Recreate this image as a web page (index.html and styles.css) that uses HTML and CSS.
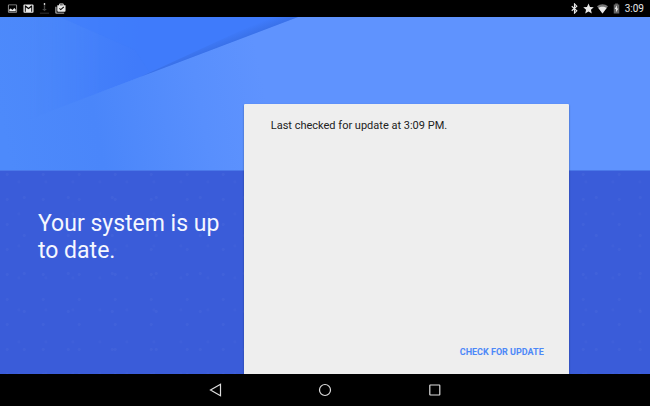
FILE: index.html
```html
<!DOCTYPE html>
<html lang="en">
<head>
  <meta charset="UTF-8">
  <meta name="viewport" content="width=device-width, initial-scale=1">
  <title>System update</title>
  <link rel="stylesheet" href="styles.css">
</head>
<body>

  <header class="status-bar">
    <div class="notifications">
      <svg class="icon dim" viewBox="0 0 24 24"><path d="M4 3h16a2 2 0 0 1 2 2v14a2 2 0 0 1-2 2H4a2 2 0 0 1-2-2V5a2 2 0 0 1 2-2zm0 2v14h16V5z" fill-rule="evenodd"/><path class="picture" d="M5 18v-4l3-2 4 3 4-4 3 3v4z"/></svg>
      <svg class="icon" viewBox="0 0 24 24"><path d="M3 3h18a2 2 0 0 1 2 2v14a2 2 0 0 1-2 2H3a2 2 0 0 1-2-2V5a2 2 0 0 1 2-2zm1 16h2V9l6 4.500L18 9v10h2V5.500h-2l-6 5-6-5H4z" fill-rule="evenodd"/></svg>
      <svg class="icon download" viewBox="0 0 24 24"><path class="download-tip" d="M10.500 0h3v5h-3z"/><path d="M10.500 6h3v7H17l-5 5-5-5h3.500zM2 21h20v2H2z"/></svg>
      <svg class="icon" viewBox="0 0 24 24"><path d="M1 8h2v13h17v2H3a2 2 0 0 1-2-2zM9 5V3a2 2 0 0 1 2-2h6a2 2 0 0 1 2 2v2h4v12a2 2 0 0 1-2 2H7a2 2 0 0 1-2-2V5zm2 0h6V3h-6zm1.500 11L20 9l-1.500-1.500-6 5.500-2-2L9 12.500z" fill-rule="evenodd"/></svg>
    </div>
    <div class="system">
      <svg class="icon" viewBox="0 0 24 24"><path d="M6 7l11 10-5 5V2l5 5L6 17" fill="none" stroke="currentColor" stroke-width="2.500"/></svg>
      <svg class="icon" viewBox="0 0 24 24"><path d="M12 1l3.300 7.500 8.200.8-6.200 5.400 1.900 8L12 18.500l-7.200 4.200 1.900-8L.5 9.300l8.200-.8z"/></svg>
      <svg class="icon" viewBox="0 0 24 24"><path class="wifi-weak" d="M12 23L0 7c7-6 17-6 24 0z"/><path d="M12 23L3 11c5-4 13-4 18 0z"/></svg>
      <svg class="icon" viewBox="0 0 24 24"><path class="battery" d="M9 1h6v2h3v20H6V3h3z"/><path d="M13 5l-5 8h3v7l5-8h-3z"/></svg>
      <time class="clock">3:09</time>
    </div>
  </header>

  <main class="update">
    <svg class="backdrop" viewBox="0 0 650 153" preserveAspectRatio="none">
      <defs>
        <linearGradient id="base" gradientUnits="userSpaceOnUse" x1="0" y1="100" x2="260" y2="50">
          <stop offset="0" stop-color="#4d8afb"/>
          <stop offset=".35" stop-color="#4a86fa"/>
          <stop offset=".75" stop-color="#588ffd"/>
          <stop offset="1" stop-color="#5f93fe"/>
        </linearGradient>
        <linearGradient id="fold" gradientUnits="userSpaceOnUse" x1="0" y1="0" x2="140" y2="15">
          <stop offset="0" stop-color="#4f8cfc"/>
          <stop offset=".4" stop-color="#4784fa"/>
          <stop offset="1" stop-color="#407bfa"/>
        </linearGradient>
        <linearGradient id="tip" gradientUnits="userSpaceOnUse" x1="30" y1="0" x2="100" y2="0">
          <stop offset="0" stop-color="#fff" stop-opacity="0"/>
          <stop offset="1" stop-color="#fff"/>
        </linearGradient>
        <linearGradient id="edge" gradientUnits="userSpaceOnUse" x1="298" y1="0" x2="295" y2="-8">
          <stop offset="0" stop-color="#3568d8" stop-opacity=".5"/>
          <stop offset="1" stop-color="#3568d8" stop-opacity="0"/>
        </linearGradient>
        <mask id="fade">
          <path d="M0 0H298L30 102 0 113z" fill="url(#tip)"/>
        </mask>
      </defs>
      <path d="M0 0H650V153H0z" fill="url(#base)"/>
      <path d="M0 0H298L30 102 0 113z" fill="url(#fold)" mask="url(#fade)"/>
      <path d="M60 0H298L150 56 135 33z" fill="#3e7bfb" opacity=".5"/>
      <path d="M270 0H298L140 60z" fill="url(#edge)"/>
    </svg>

    <h1 class="headline">Your system is up to date.</h1>

    <section class="card">
      <p class="last-checked">Last checked for update at 3:09 PM.</p>
      <button class="check-button" type="button">CHECK FOR UPDATE</button>
    </section>
  </main>

  <nav class="nav-bar">
    <button class="nav-button" type="button" aria-label="Back">
      <svg viewBox="0 0 14 14"><path d="M12.500 1.300v11.400L2.500 7z"/></svg>
    </button>
    <button class="nav-button" type="button" aria-label="Home">
      <svg viewBox="0 0 14 14"><circle cx="7" cy="7" r="5.500"/></svg>
    </button>
    <button class="nav-button" type="button" aria-label="Recent apps">
      <svg viewBox="0 0 14 14"><rect x="1.800" y="2" width="10" height="10" rx=".5"/></svg>
    </button>
  </nav>

</body>
</html>
```

FILE: styles.css
```css
* {
  box-sizing: border-box;
}
body {
  margin: 0;
  min-height: 100vh;
  display: flex;
  flex-direction: column;
  background-color: #000;
  font-family: Roboto, Arial, sans-serif;
}
h1, p {
  margin: 0;
}
button {
  padding: 0;
  border: none;
  background: none;
  font-family: inherit;
  cursor: pointer;
}

.status-bar {
  height: 17px;
  padding: 0 6px 0 7px;
  display: flex;
  justify-content: space-between;
  color: #e8e8e8;
}
.notifications, .system {
  display: flex;
  align-items: center;
}
.notifications {
  gap: 5px;
}
.system {
  gap: 3px;
}
.icon {
  width: 11px;
  height: 11px;
  fill: currentColor;
}
.dim {
  color: #999;
}
.picture {
  fill: #eee;
}
.download {
  color: #444;
}
.download-tip {
  fill: #ccc;
}
.wifi-weak {
  fill: #777;
}
.battery {
  fill: #666;
}
.clock {
  font-size: 10px;
}

.update {
  position: relative;
  flex: 1;
  display: grid;
  grid-template-columns: 3fr 4fr 1fr;
  background-color: #3a5cd9;
  /* faint specks in the paper */
  background-image:
    radial-gradient(circle at 20% 30%, rgba(255, 255, 255, 0.03) 1px, transparent 2px),
    radial-gradient(circle at 70% 15%, rgba(255, 255, 255, 0.02) 1px, transparent 2px),
    radial-gradient(circle at 55% 75%, rgba(255, 255, 255, 0.03) 1px, transparent 2px);
  background-size: 36px 25px, 27px 32px, 44px 38px;
}
/* folded paper shapes behind the card */
.backdrop {
  position: absolute;
  top: 0;
  left: 0;
  width: 100%;
  height: 154px;
  border-bottom: 1px solid #4a78e8;
}
.headline {
  position: relative;
  padding: 193px 16px 0 38px;
  color: #f5f7ff;
  font-size: 23px;
  font-weight: 400;
  line-height: 27px;
}
.card {
  position: relative;
  margin-top: 87px;
  padding: 14px 25px 15px 27px;
  display: flex;
  flex-direction: column;
  justify-content: space-between;
  background-color: #eee;
  border-radius: 1px 1px 0 0;
  box-shadow: 0 1px 2px rgba(0, 0, 0, 0.4);
}
.last-checked {
  color: #222;
  font-size: 11px;
  line-height: 16px;
}
.check-button {
  align-self: flex-end;
  color: #4d88f8;
  font-size: 9px;
  font-weight: 700;
  line-height: 14px;
}

.nav-bar {
  position: relative;
  height: 32px;
  display: flex;
  justify-content: center;
  align-items: center;
  gap: 96px;
  background-color: #000;
}
.nav-button {
  width: 14px;
  height: 14px;
}
.nav-button svg {
  display: block;
  fill: none;
  stroke: #ddd;
  stroke-width: 1.2;
}
```
